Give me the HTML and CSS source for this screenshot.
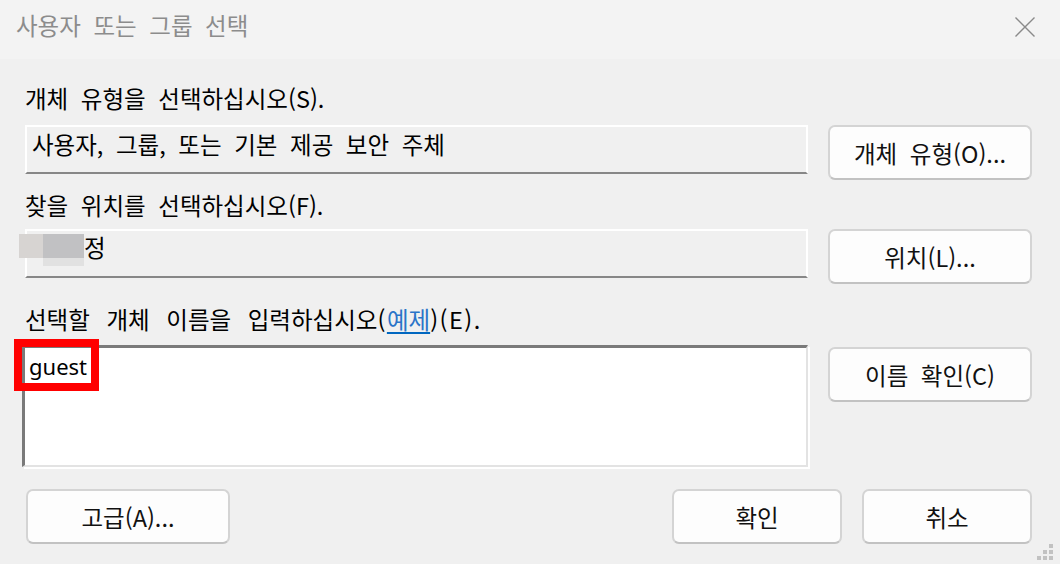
FILE: index.html
```html
<!DOCTYPE html>
<html lang="ko">
<head>
<meta charset="utf-8">
<title>사용자 또는 그룹 선택</title>
<link rel="stylesheet" href="styles.css">
</head>
<body>
<div class="window">
  <div class="titlebar">
    <span class="title">사용자 또는 그룹 선택</span>
    <svg class="close" width="22" height="22" viewBox="0 0 22 22"><path d="M1.5 1.5L20.5 20.5M20.5 1.5L1.5 20.5"/></svg>
  </div>
  <div class="main">
    <div class="label l1">개체 유형을 선택하십시오(S).</div>
    <div class="row r1">
      <div class="field f1">사용자, 그룹, 또는 기본 제공 보안 주체</div>
      <div class="btn">개체 유형(O)...</div>
    </div>
    <div class="label l2">찾을 위치를 선택하십시오(F).</div>
    <div class="row r2">
      <div class="field f2"><span class="redact"><i class="ra"></i><i class="rb"></i><i class="rc"></i></span>정</div>
      <div class="btn">위치(L)...</div>
    </div>
    <div class="label l3">선택할 개체 이름을 입력하십시오<span class="paren">(</span><span class="link">예제</span><span class="paren">)(E).</span></div>
    <div class="row r3">
      <div class="textarea"><span class="typed">guest</span><span class="mark"></span></div>
      <div class="btn btn-check">이름 확인(C)</div>
    </div>
    <div class="footer">
      <div class="btn btn-adv">고급(A)...</div>
      <div class="spacer"></div>
      <div class="btn btn-sm">확인</div>
      <div class="btn btn-sm">취소</div>
    </div>
  </div>
  <svg class="grip" width="18" height="18" viewBox="0 0 18 18">
    <rect x="12" y="0" width="4" height="4"/>
    <rect x="6" y="6" width="4" height="4"/>
    <rect x="12" y="6" width="4" height="4"/>
    <rect x="0" y="12" width="4" height="4"/>
    <rect x="6" y="12" width="4" height="4"/>
    <rect x="12" y="12" width="4" height="4"/>
  </svg>
</div>
</body>
</html>
```

FILE: styles.css
```css
html, body {
  margin: 0;
  padding: 0;
  width: 1060px;
  height: 564px;
  overflow: hidden;
  background: #f0f0f0;
}

.window {
  position: relative;
  width: 1060px;
  height: 564px;
  background: #f0f0f0;
  font-family: "Noto Sans CJK KR", "Noto Sans", sans-serif;
  font-size: 23.5px;
  color: #000;
  word-spacing: 6px;
}

.titlebar {
  height: 59px;
  background: #f3f3f3;
  display: flex;
  align-items: flex-start;
  justify-content: space-between;
  padding: 10px 24px 0 16px;
  box-sizing: border-box;
}

.title {
  line-height: 30px;
  color: #8c8c8c;
}

.close {
  margin-top: 6px;
  stroke: #8a8a8a;
  stroke-width: 1.4;
  fill: none;
}

.main {
  padding: 24px 28px 0 25px;
}

.label {
  height: 30px;
  line-height: 30px;
  white-space: nowrap;
}

.l1 { margin-bottom: 12px; }
.l2 { margin-top: 10px; margin-bottom: 9px; }
.l3 { margin-top: 20px; margin-bottom: 11px; word-spacing: 10px; }

.paren { letter-spacing: 1.5px; }

.link {
  color: #2a74c8;
  text-decoration: underline;
  text-decoration-color: #0067c0;
  text-decoration-thickness: 2px;
  text-underline-offset: 3px;
}

.row {
  display: grid;
  grid-template-columns: 783px 204px;
  column-gap: 20px;
  align-items: start;
}

.field {
  height: 49px;
  box-sizing: border-box;
  background: #f0f0f0;
  border: 2px solid #ffffff;
  border-bottom: 2px solid #878787;
  padding: 2px 5px 0 5px;
  line-height: 30px;
  white-space: nowrap;
}

.f2 { padding-top: 1px; }

.redact {
  display: inline-grid;
  grid-template-columns: 24px 41px;
  grid-template-rows: 24px 8px;
  vertical-align: top;
  margin: 2px 0 0 -13px;
}
.redact i { display: block; }
.ra { background: #d7d4d2; grid-row: 1; grid-column: 1; }
.rb { background: #c1c1c3; grid-row: 1; grid-column: 2; }
.rc { background: #e1e1e1; grid-row: 2; grid-column: 2; }

.btn {
  height: 55px;
  box-sizing: border-box;
  background: #fdfdfd;
  border: 2px solid #d4d4d4;
  border-bottom-color: #c2c2c2;
  border-radius: 7px;
  display: flex;
  align-items: center;
  justify-content: center;
  line-height: 30px;
  white-space: nowrap;
  color: #111;
}

.textarea {
  position: relative;
  margin-left: -3px;
  width: 786px;
  height: 122px;
  box-sizing: border-box;
  background: #ffffff;
  border-top: 3px solid #7a7a7a;
  border-left: 3px solid #7a7a7a;
  border-right: 2px solid #e3e3e3;
  border-bottom: 2px solid #e3e3e3;
  box-shadow: 2px 2px 0 #ffffff;
  padding: 0 0 0 4px;
}

.typed {
  font-family: "Noto Sans", sans-serif;
  font-size: 22px;
  line-height: 26px;
  word-spacing: 0;
}

.mark {
  position: absolute;
  left: -11px;
  top: -9px;
  width: 85px;
  height: 52px;
  box-sizing: border-box;
  border: 8px solid #ff0000;
}

.btn-check { margin-top: 2px; }

.footer {
  display: flex;
  column-gap: 20px;
  margin-top: 22px;
  margin-left: 1px;
}

.btn-adv { width: 204px; }
.btn-sm { width: 170px; }
.spacer { flex: 1; }

.grip {
  position: absolute;
  right: 5px;
  bottom: 2px;
  fill: #c2c2c2;
}
```
